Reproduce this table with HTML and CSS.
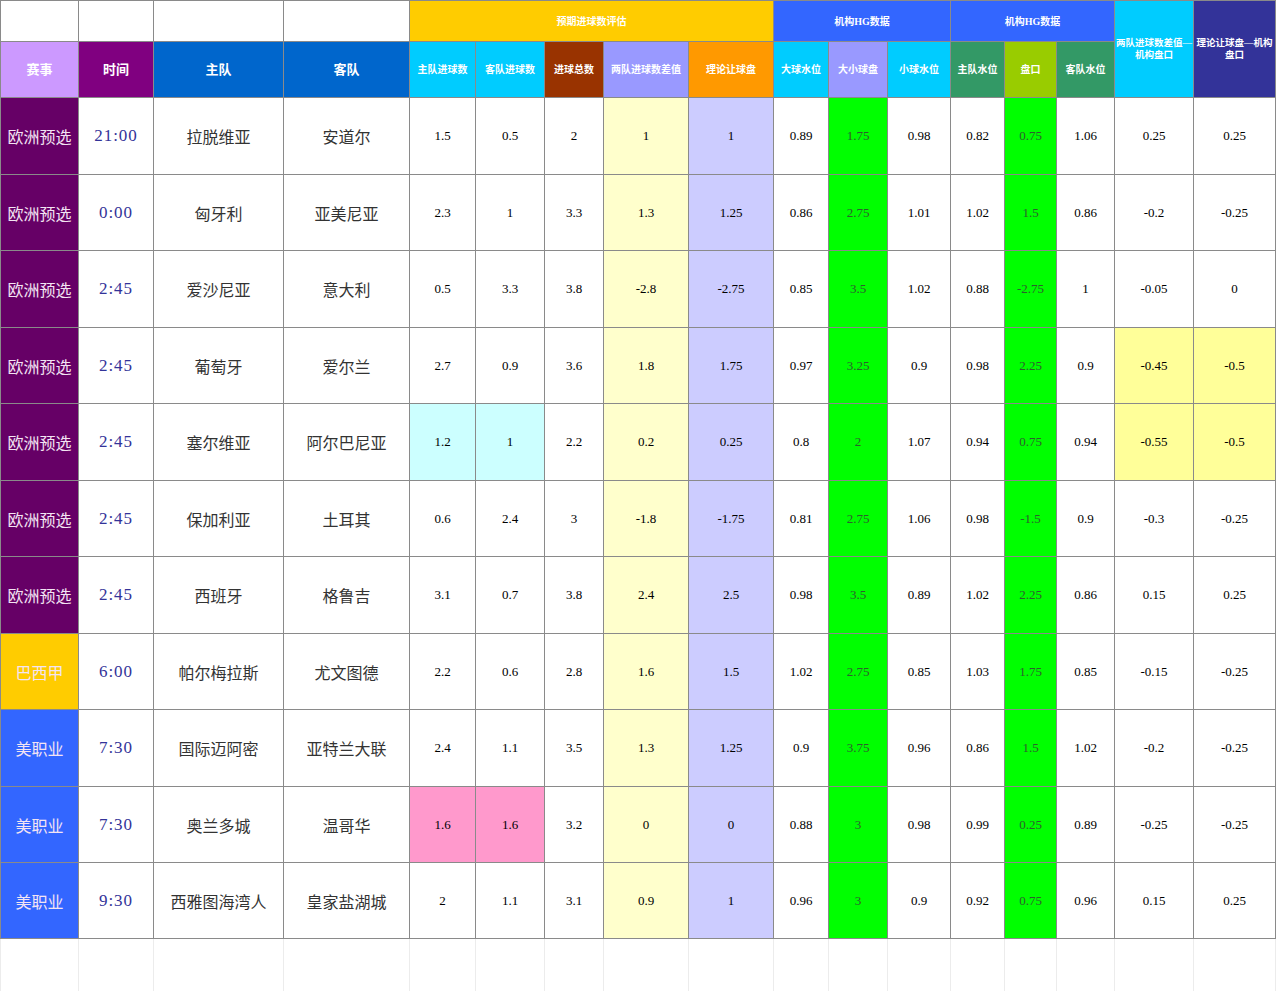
FILE: index.html
```html
<!DOCTYPE html>
<html lang="zh">
<head>
<meta charset="utf-8">
<title>预期进球数评估</title>
<link rel="stylesheet" href="styles.css">
</head>
<body>
<table class="sheet">
<colgroup>
<col class="w78"><col class="w75"><col class="w130"><col class="w126"><col class="w66"><col class="w69"><col class="w59"><col class="w85"><col class="w85"><col class="w55"><col class="w59"><col class="w63"><col class="w54"><col class="w52"><col class="w58"><col class="w79"><col class="w82">
</colgroup>
<thead>
<tr class="h1">
<th class="blank"></th><th class="blank"></th><th class="blank"></th><th class="blank"></th>
<th colspan="5" class="g-yellow small">预期进球数评估</th>
<th colspan="3" class="g-blue small">机构HG数据</th>
<th colspan="3" class="g-blue small">机构HG数据</th>
<th rowspan="2" class="h-cyan tiny">两队进球数差值—机构盘口</th>
<th rowspan="2" class="h-navy tiny">理论让球盘—机构盘口</th>
</tr>
<tr class="h2">
<th class="h-lilac big">赛事</th>
<th class="h-purple big">时间</th>
<th class="h-azure big">主队</th>
<th class="h-azure big">客队</th>
<th class="h-cyan small">主队进球数</th>
<th class="h-cyan small">客队进球数</th>
<th class="h-brown small">进球总数</th>
<th class="h-periwinkle small">两队进球数差值</th>
<th class="h-orange small">理论让球盘</th>
<th class="h-cyan small">大球水位</th>
<th class="h-periwinkle small">大小球盘</th>
<th class="h-cyan small">小球水位</th>
<th class="h-green small">主队水位</th>
<th class="h-olive small">盘口</th>
<th class="h-green small">客队水位</th>
</tr>
</thead>
<tbody>
<tr class="row r77">
<td class="lg euro">欧洲预选</td><td class="tm">21:00</td><td class="tn">拉脱维亚</td><td class="tn">安道尔</td>
<td>1.5</td><td>0.5</td><td>2</td><td class="c-diff">1</td><td class="c-hcp">1</td>
<td>0.89</td><td class="c-line">1.75</td><td>0.98</td><td>0.82</td><td class="c-line">0.75</td><td>1.06</td><td>0.25</td><td>0.25</td>
</tr>
<tr class="row r76">
<td class="lg euro">欧洲预选</td><td class="tm">0:00</td><td class="tn">匈牙利</td><td class="tn">亚美尼亚</td>
<td>2.3</td><td>1</td><td>3.3</td><td class="c-diff">1.3</td><td class="c-hcp">1.25</td>
<td>0.86</td><td class="c-line">2.75</td><td>1.01</td><td>1.02</td><td class="c-line">1.5</td><td>0.86</td><td>-0.2</td><td>-0.25</td>
</tr>
<tr class="row r77">
<td class="lg euro">欧洲预选</td><td class="tm">2:45</td><td class="tn">爱沙尼亚</td><td class="tn">意大利</td>
<td>0.5</td><td>3.3</td><td>3.8</td><td class="c-diff">-2.8</td><td class="c-hcp">-2.75</td>
<td>0.85</td><td class="c-line">3.5</td><td>1.02</td><td>0.88</td><td class="c-line">-2.75</td><td>1</td><td>-0.05</td><td>0</td>
</tr>
<tr class="row r76">
<td class="lg euro">欧洲预选</td><td class="tm">2:45</td><td class="tn">葡萄牙</td><td class="tn">爱尔兰</td>
<td>2.7</td><td>0.9</td><td>3.6</td><td class="c-diff">1.8</td><td class="c-hcp">1.75</td>
<td>0.97</td><td class="c-line">3.25</td><td>0.9</td><td>0.98</td><td class="c-line">2.25</td><td>0.9</td><td class="hl-yellow">-0.45</td><td class="hl-yellow">-0.5</td>
</tr>
<tr class="row r77">
<td class="lg euro">欧洲预选</td><td class="tm">2:45</td><td class="tn">塞尔维亚</td><td class="tn">阿尔巴尼亚</td>
<td class="hl-cyan">1.2</td><td class="hl-cyan">1</td><td>2.2</td><td class="c-diff">0.2</td><td class="c-hcp">0.25</td>
<td>0.8</td><td class="c-line">2</td><td>1.07</td><td>0.94</td><td class="c-line">0.75</td><td>0.94</td><td class="hl-yellow">-0.55</td><td class="hl-yellow">-0.5</td>
</tr>
<tr class="row r76">
<td class="lg euro">欧洲预选</td><td class="tm">2:45</td><td class="tn">保加利亚</td><td class="tn">土耳其</td>
<td>0.6</td><td>2.4</td><td>3</td><td class="c-diff">-1.8</td><td class="c-hcp">-1.75</td>
<td>0.81</td><td class="c-line">2.75</td><td>1.06</td><td>0.98</td><td class="c-line">-1.5</td><td>0.9</td><td>-0.3</td><td>-0.25</td>
</tr>
<tr class="row r77">
<td class="lg euro">欧洲预选</td><td class="tm">2:45</td><td class="tn">西班牙</td><td class="tn">格鲁吉</td>
<td>3.1</td><td>0.7</td><td>3.8</td><td class="c-diff">2.4</td><td class="c-hcp">2.5</td>
<td>0.98</td><td class="c-line">3.5</td><td>0.89</td><td>1.02</td><td class="c-line">2.25</td><td>0.86</td><td>0.15</td><td>0.25</td>
</tr>
<tr class="row r76">
<td class="lg brazil">巴西甲</td><td class="tm">6:00</td><td class="tn">帕尔梅拉斯</td><td class="tn">尤文图德</td>
<td>2.2</td><td>0.6</td><td>2.8</td><td class="c-diff">1.6</td><td class="c-hcp">1.5</td>
<td>1.02</td><td class="c-line">2.75</td><td>0.85</td><td>1.03</td><td class="c-line">1.75</td><td>0.85</td><td>-0.15</td><td>-0.25</td>
</tr>
<tr class="row r77">
<td class="lg mls">美职业</td><td class="tm">7:30</td><td class="tn">国际迈阿密</td><td class="tn">亚特兰大联</td>
<td>2.4</td><td>1.1</td><td>3.5</td><td class="c-diff">1.3</td><td class="c-hcp">1.25</td>
<td>0.9</td><td class="c-line">3.75</td><td>0.96</td><td>0.86</td><td class="c-line">1.5</td><td>1.02</td><td>-0.2</td><td>-0.25</td>
</tr>
<tr class="row r76">
<td class="lg mls">美职业</td><td class="tm">7:30</td><td class="tn">奥兰多城</td><td class="tn">温哥华</td>
<td class="hl-pink">1.6</td><td class="hl-pink">1.6</td><td>3.2</td><td class="c-diff">0</td><td class="c-hcp">0</td>
<td>0.88</td><td class="c-line">3</td><td>0.98</td><td>0.99</td><td class="c-line">0.25</td><td>0.89</td><td>-0.25</td><td>-0.25</td>
</tr>
<tr class="row r76">
<td class="lg mls">美职业</td><td class="tm">9:30</td><td class="tn">西雅图海湾人</td><td class="tn">皇家盐湖城</td>
<td>2</td><td>1.1</td><td>3.1</td><td class="c-diff">0.9</td><td class="c-hcp">1</td>
<td>0.96</td><td class="c-line">3</td><td>0.9</td><td>0.92</td><td class="c-line">0.75</td><td>0.96</td><td>0.15</td><td>0.25</td>
</tr>
<tr class="ghost">
<td></td><td></td><td></td><td></td><td></td><td></td><td></td><td></td><td></td><td></td><td></td><td></td><td></td><td></td><td></td><td></td><td></td>
</tr>
</tbody>
</table>
</body>
</html>
```

FILE: styles.css
```css
html, body {
  margin: 0;
  padding: 0;
  background: #ffffff;
}

.sheet {
  border-collapse: collapse;
  table-layout: fixed;
  width: 1275px;
  font-family: "Liberation Serif", "Noto Sans CJK SC", serif;
  color: #000;
}

.w78 { width: 78px; }
.w75 { width: 75px; }
.w130 { width: 130px; }
.w126 { width: 126px; }
.w66 { width: 66px; }
.w69 { width: 69px; }
.w59 { width: 59px; }
.w85 { width: 85px; }
.w55 { width: 55px; }
.w63 { width: 63px; }
.w54 { width: 54px; }
.w52 { width: 52px; }
.w58 { width: 58px; }
.w79 { width: 79px; }
.w82 { width: 82px; }

.sheet th,
.sheet td {
  border: 1px solid #8a8a8a;
  padding: 0 2px;
  text-align: center;
  vertical-align: middle;
  overflow: hidden;
}

.sheet th {
  color: #ffffff;
  font-family: "Liberation Serif", "Noto Sans CJK SC", serif;
  font-weight: 700;
  line-height: 13px;
}

.h1 { height: 41px; }
.h2 { height: 56px; }

.small { font-size: 10px; }
.big { font-size: 13px; }
.sheet th.tiny {
  font-size: 9.5px;
  padding: 0;
  line-height: 12px;
}

.blank { background: #ffffff; border-color: #9a9a9a; }
.g-yellow { background: #ffcc00; }
.g-blue { background: #3366ff; }
.h-lilac { background: #cc99ff; }
.h-purple { background: #800080; }
.h-azure { background: #0066cc; }
.h-cyan { background: #00ccff; }
.h-brown { background: #993300; }
.h-periwinkle { background: #9999ff; }
.h-orange { background: #ff9900; }
.h-green { background: #339966; }
.h-olive { background: #99cc00; }
.h-navy { background: #333399; }

.row td {
  font-size: 13px;
}

.r77 { height: 77px; }
.r76 { height: 76px; }

.sheet td.lg {
  font-family: "Noto Sans CJK SC", sans-serif;
  font-size: 16px;
  color: #f3e4f3;
  padding: 0;
}

.euro { background: #660066; }
.brazil { background: #ffcc00; }
.mls { background: #3366ff; }

.sheet td.tm {
  font-family: "Liberation Serif", serif;
  font-size: 17px;
  letter-spacing: 1px;
  color: #333399;
}

.sheet td.tn {
  font-family: "Noto Sans CJK SC", sans-serif;
  font-size: 16px;
  color: #333333;
}

.c-diff { background: #ffffcc; }
.c-hcp { background: #ccccff; }
.sheet td.c-line { background: #00ff00; color: #2e5e2e; }

.hl-yellow { background: #ffff99; }
.hl-cyan { background: #ccffff; }
.hl-pink { background: #ff99cc; }

.ghost { height: 52px; }
.sheet .ghost td {
  border-top: 1px solid #8a8a8a;
  border-left: 1px solid #ececec;
  border-right: 1px solid #ececec;
  border-bottom: none;
}
```
